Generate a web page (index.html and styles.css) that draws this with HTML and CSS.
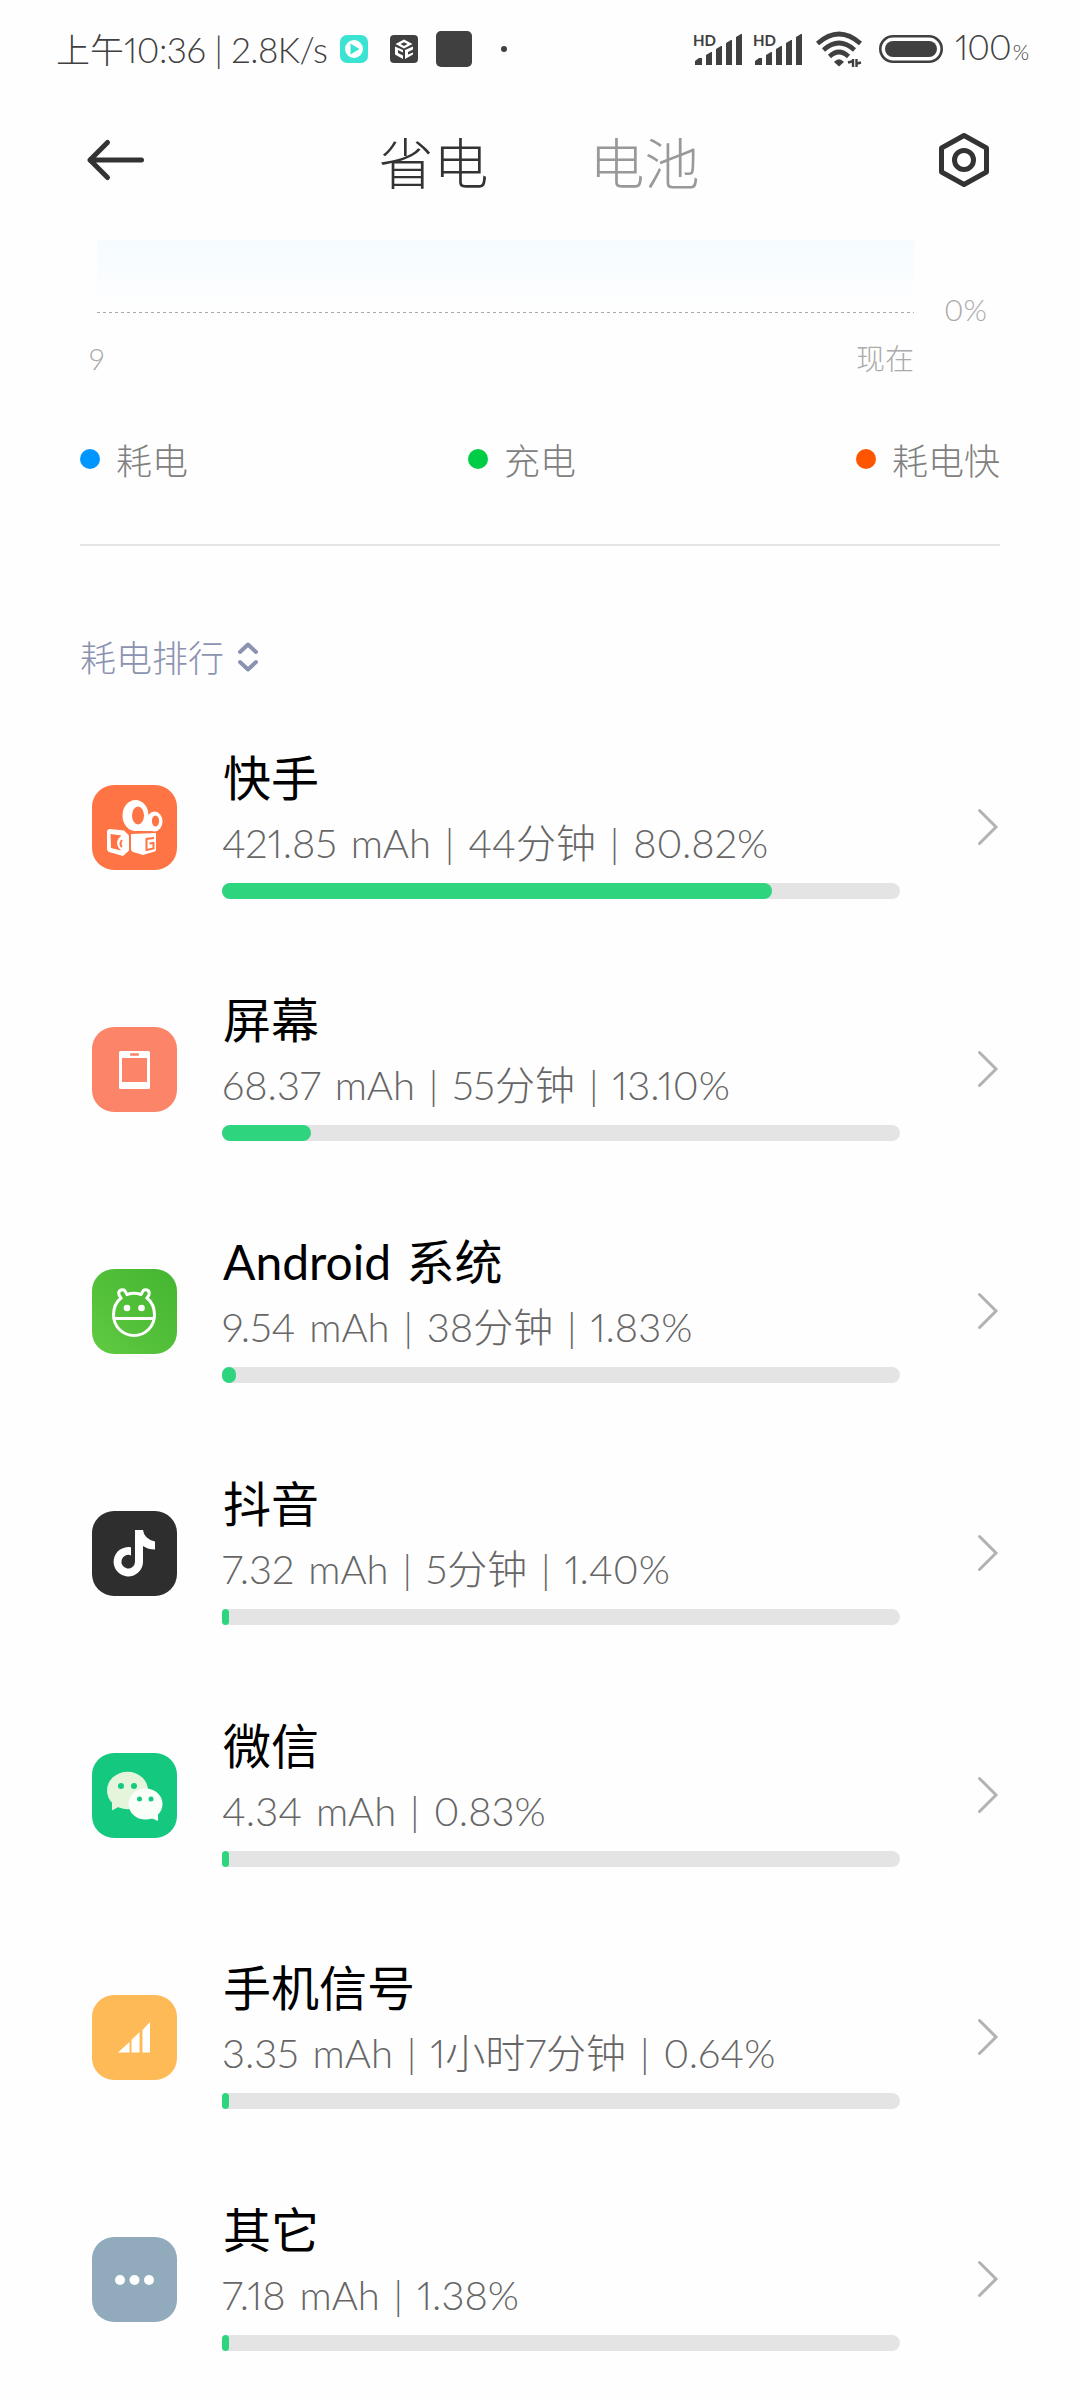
FILE: index.html
```
<!DOCTYPE html>
<html lang="zh-CN">
<head>
  <meta charset="UTF-8">
  <meta name="viewport" content="width=device-width, initial-scale=1.0">
  <title>省电与电池</title>
  <link rel="stylesheet" href="styles.css">
</head>
<body>
  <div class="statusbar">
    <span class="clock">上午<span class="clock-num">10:36 | 2.8K/s</span></span>
    <svg class="notif" width="132" height="36" viewBox="0 0 132 36">
      <rect x="0" y="4" width="28" height="28" rx="7" fill="#3be3d2"/>
      <circle cx="14" cy="18" r="9" fill="#fff"/>
      <path d="M10.5 12.5v11l9-5.5z" fill="#3be3d2"/>
      <rect x="50" y="4" width="28" height="28" rx="4" fill="#404040"/>
      <path d="M64 8.5l8.5 4.5-8.5 4.5-8.5-4.5zM63 28l-8-4.500v-8l8 3.500v2.500l-5-2.500v3l5 2.500zM65 28l8-4.500v-2l-5 2v-2.500l5-2.500v-3l-8 3.500z" fill="#fff"/>
      <path d="M64 11.300l3.500 1.700-3.500 2-3.500-2z" fill="#404040"/>
      <rect x="96" y="0" width="36" height="36" rx="5" fill="#404040"/>
    </svg>
    <span class="more-dot"></span>
    <div class="status-right">
      <svg class="signal" width="50" height="36" viewBox="0 0 50 36">
        <text class="hd" x="0" y="15" textLength="23" lengthAdjust="spacingAndGlyphs">HD</text>
        <path d="M2 34v-4l4-3h3v7zM13 34V24l5-3h1v13zM23 34V18l5-3h1v19zM33 34V12l5-3h1v25zM43 34V6l5-3h1v31z"/>
      </svg>
      <svg class="signal" width="50" height="36" viewBox="0 0 50 36">
        <text class="hd" x="0" y="15" textLength="23" lengthAdjust="spacingAndGlyphs">HD</text>
        <path d="M2 34v-4l4-3h3v7zM13 34V24l5-3h1v13zM23 34V18l5-3h1v19zM33 34V12l5-3h1v25zM43 34V6l5-3h1v31z"/>
      </svg>
      <svg class="wifi" width="46" height="36" viewBox="0 0 46 36">
        <g fill="none" stroke="#404040" stroke-width="4.600">
          <path d="M1.500 12.500q21.500-19 43 0"/>
          <path d="M7.500 19q15.500-14 31 0"/>
          <path d="M13.500 25.500q9.500-9 19 0"/>
        </g>
        <path d="M18 31q5-5.500 10 0l-5 4.500z" fill="#404040"/>
        <path d="M32 31.500l4-1M37 36v-8M40.500 36v-8M41 32.500l4-1" fill="none" stroke="#404040" stroke-width="2.400"/>
      </svg>
      <svg class="battery" width="64" height="28" viewBox="0 0 64 28">
        <rect x="1.300" y="1.300" width="61.400" height="25.400" rx="12.700" fill="none" stroke="#404040" stroke-width="2.600"/>
        <rect x="6" y="6" width="52" height="16" rx="8" fill="#404040"/>
      </svg>
      <span class="level">100<small>%</small></span>
    </div>
  </div>

  <div class="header">
    <svg class="back" width="58" height="40" viewBox="0 0 58 40">
      <path d="M20.500 2.500L3 20l17.500 17.500M3 20h51.500" fill="none" stroke="#333" stroke-width="5" stroke-linecap="round" stroke-linejoin="round"/>
    </svg>
    <div class="tabs">
      <span class="tab active">省电</span>
      <span class="tab">电池</span>
    </div>
    <svg class="settings" width="50" height="54" viewBox="0 0 50 54">
      <path d="M25 2.500L47.500 15v24L25 51.500 2.500 39V15z" fill="none" stroke="#333" stroke-width="5" stroke-linejoin="round"/>
      <circle cx="25" cy="27" r="9.500" fill="none" stroke="#333" stroke-width="5"/>
    </svg>
  </div>

  <div class="chart">
    <div class="plot"></div>
    <span class="percent">0%</span>
  </div>
  <div class="axis">
    <span>9</span>
    <span>现在</span>
  </div>

  <div class="legend">
    <span class="legend-item"><i class="dot blue"></i>耗电</span>
    <span class="legend-item"><i class="dot green"></i>充电</span>
    <span class="legend-item"><i class="dot orange"></i>耗电快</span>
  </div>

  <div class="sort">
    <span>耗电排行</span>
    <svg width="20" height="30" viewBox="0 0 20 30">
      <path d="M2 10l8-7.500 8 7.500M2 20l8 7.500 8-7.500" fill="none" stroke="#8c93b0" stroke-width="4" stroke-linecap="round" stroke-linejoin="round"/>
    </svg>
  </div>

  <div class="list">
    <div class="row">
      <svg class="icon" viewBox="0 0 85 85">
        <rect width="85" height="85" rx="22" fill="#ff7444"/>
        <ellipse cx="43.500" cy="30.500" rx="13" ry="15.500" fill="#fff"/>
        <ellipse cx="62.500" cy="36.500" rx="8" ry="10" fill="#fff"/>
        <path d="M40 36h22v10H43z" fill="#fff"/>
        <ellipse cx="46" cy="30.500" rx="6" ry="9" fill="#ff7444"/>
        <ellipse cx="63.500" cy="36" rx="3.600" ry="5.500" fill="#ff7444"/>
        <path d="M18 44l14 1.500 5 5v15L31 71l-14-4q-2-1-2-3V47q0-3 3-3z" fill="#fff"/>
        <path d="M18.500 49l11 1.500-3 3q-3 5 0 9l2.500 3-10-2.500z" fill="#ff7444"/>
        <path d="M30 55q-3 4 0 7" fill="none" stroke="#ff7444" stroke-width="2"/>
        <path d="M39 49l25-1v16q0 3-3 3l-10 3-10-3q-2-1-2-3z" fill="#fff"/>
        <path d="M62 53l-7.500 1v11l7-1.500v-5.500l-4 .500" fill="none" stroke="#ff7444" stroke-width="2"/>
      </svg>
      <div class="info">
        <div class="name">快手</div>
        <div class="usage">421.85 mAh | 44分钟 | 80.82%</div>
        <div class="bar"><div class="fill" style="width: 550px"></div></div>
      </div>
      <svg class="chevron" viewBox="0 0 22 38"><path d="M2.500 2.500L19 19 2.500 35.500"/></svg>
    </div>

    <div class="row">
      <svg class="icon" viewBox="0 0 85 85">
        <rect width="85" height="85" rx="22" fill="#fb8469"/>
        <rect x="27" y="24" width="31" height="38" rx="1.500" fill="#fff"/>
        <rect x="30" y="31" width="25" height="24" fill="#fb8469"/>
        <rect x="38" y="26.300" width="9" height="2.400" rx="1" fill="#fb8469"/>
      </svg>
      <div class="info">
        <div class="name">屏幕</div>
        <div class="usage">68.37 mAh | 55分钟 | 13.10%</div>
        <div class="bar"><div class="fill" style="width: 89px"></div></div>
      </div>
      <svg class="chevron" viewBox="0 0 22 38"><path d="M2.500 2.500L19 19 2.500 35.500"/></svg>
    </div>

    <div class="row">
      <svg class="icon" viewBox="0 0 85 85">
        <defs>
          <linearGradient id="android" x1="0" y1="1" x2="1" y2="0">
            <stop offset="0" stop-color="#60ca42"/>
            <stop offset="1" stop-color="#44b42f"/>
          </linearGradient>
        </defs>
        <rect width="85" height="85" rx="22" fill="url(#android)"/>
        <path d="M29 29l-2-3q-1-4 2-5 3-1 4 1l2 3.500q7-2.500 14 0l2-3.500q1-2 4-1 3 1 2 5l-2 3q7.500 6 7.500 17a20.500 20.500 0 0 1-41 0q0-11 7.500-17zM21.500 49.500h41" fill="none" stroke="#fff" stroke-width="3"/>
        <circle cx="35" cy="39" r="3.300" fill="#fff"/>
        <circle cx="49.500" cy="39" r="3.300" fill="#fff"/>
      </svg>
      <div class="info">
        <div class="name">Android 系统</div>
        <div class="usage">9.54 mAh | 38分钟 | 1.83%</div>
        <div class="bar"><div class="fill" style="width: 14px"></div></div>
      </div>
      <svg class="chevron" viewBox="0 0 22 38"><path d="M2.500 2.500L19 19 2.500 35.500"/></svg>
    </div>

    <div class="row">
      <svg class="icon" viewBox="0 0 85 85">
        <rect width="85" height="85" rx="22" fill="#2e2e2e"/>
        <path d="M43 19h8q1 9 12 11.500v8q-7 0-12-3.500v16a14.700 14.700 0 1 1-12-14.700v8.200a6.800 6.800 0 1 0 4 6.500z" fill="#fff"/>
      </svg>
      <div class="info">
        <div class="name">抖音</div>
        <div class="usage">7.32 mAh | 5分钟 | 1.40%</div>
        <div class="bar"><div class="fill" style="width: 7px"></div></div>
      </div>
      <svg class="chevron" viewBox="0 0 22 38"><path d="M2.500 2.500L19 19 2.500 35.500"/></svg>
    </div>

    <div class="row">
      <svg class="icon" viewBox="0 0 85 85">
        <rect width="85" height="85" rx="22" fill="#14c880"/>
        <ellipse cx="35.500" cy="37.500" rx="20.500" ry="18.800" fill="#e4f5dc"/>
        <path d="M20 48v9.500l9-5z" fill="#e4f5dc"/>
        <ellipse cx="53.500" cy="51" rx="17" ry="15.500" fill="#fbfffa"/>
        <path d="M57 64l9 4v-8z" fill="#fbfffa"/>
        <g fill="#14c880">
          <circle cx="29" cy="33" r="3"/>
          <circle cx="42" cy="33" r="3"/>
          <circle cx="47.500" cy="46" r="2.500"/>
          <circle cx="59" cy="46" r="2.500"/>
        </g>
      </svg>
      <div class="info">
        <div class="name">微信</div>
        <div class="usage">4.34 mAh | 0.83%</div>
        <div class="bar"><div class="fill" style="width: 7px"></div></div>
      </div>
      <svg class="chevron" viewBox="0 0 22 38"><path d="M2.500 2.500L19 19 2.500 35.500"/></svg>
    </div>

    <div class="row">
      <svg class="icon" viewBox="0 0 85 85">
        <rect width="85" height="85" rx="22" fill="#ffba58"/>
        <path d="M26 57.500L37.500 47v10.500zM39.500 45l8-8v20.500h-8zM50.500 35l7.500-8v30.500h-7.500z" fill="#fff"/>
      </svg>
      <div class="info">
        <div class="name">手机信号</div>
        <div class="usage">3.35 mAh | 1小时7分钟 | 0.64%</div>
        <div class="bar"><div class="fill" style="width: 7px"></div></div>
      </div>
      <svg class="chevron" viewBox="0 0 22 38"><path d="M2.500 2.500L19 19 2.500 35.500"/></svg>
    </div>

    <div class="row">
      <svg class="icon" viewBox="0 0 85 85">
        <rect width="85" height="85" rx="22" fill="#91abbd"/>
        <g fill="#fff">
          <circle cx="28" cy="43" r="5"/>
          <circle cx="42.500" cy="43" r="5"/>
          <circle cx="57" cy="43" r="5"/>
        </g>
      </svg>
      <div class="info">
        <div class="name">其它</div>
        <div class="usage">7.18 mAh | 1.38%</div>
        <div class="bar"><div class="fill" style="width: 7px"></div></div>
      </div>
      <svg class="chevron" viewBox="0 0 22 38"><path d="M2.500 2.500L19 19 2.500 35.500"/></svg>
    </div>
  </div>
</body>
</html>
```
FILE: styles.css
```
* {
  box-sizing: border-box;
}
body {
  margin: 0;
  width: 1080px;
  height: 2400px;
  overflow: hidden;
  background-color: #fefefe;
  font-family: Lato, "Noto Sans CJK SC", sans-serif;
  font-weight: 300;
  font-variant-numeric: proportional-nums;
}
svg {
  display: block;
  flex-shrink: 0;
  overflow: visible;
}

/* status bar */
.statusbar {
  display: flex;
  align-items: center;
  height: 98px;
  padding: 0 55px 0 56px;
  color: #404040;
}
.clock {
  flex-shrink: 0;
  width: 284px;
  font-size: 34px;
  line-height: 40px;
  white-space: nowrap;
}
.clock-num {
  font-size: 35px;
  letter-spacing: -0.5px;
}
.more-dot {
  flex-shrink: 0;
  width: 6px;
  height: 6px;
  margin-left: 29px;
  border-radius: 50%;
  background-color: #404040;
}
.status-right {
  display: flex;
  align-items: center;
  margin-left: auto;
}
.signal {
  margin-right: 10px;
  fill: #404040;
}
.hd {
  font-family: Lato, sans-serif;
  font-size: 16px;
  font-weight: 700;
}
.wifi {
  margin: 0 17px 0 3px;
}
.level {
  width: 70px;
  margin-left: 12px;
  font-size: 35px;
  line-height: 40px;
  letter-spacing: -1px;
  white-space: nowrap;
}
.level small {
  margin-left: 2px;
  font-size: 21px;
}

/* header */
.header {
  display: flex;
  align-items: center;
  justify-content: space-between;
  height: 124px;
  padding: 0 91px 0 87px;
}
.tabs {
  display: flex;
  gap: 101px;
  margin-right: 6px;
  padding-top: 5px;
}
.tab {
  font-size: 55px;
  line-height: 70px;
  color: #999;
}
.tab.active {
  color: #333;
}

/* chart */
.chart {
  display: flex;
  align-items: flex-end;
  height: 109px;
  padding: 18px 0 0 97px;
}
.plot {
  width: 817px;
  height: 73px;
  margin-bottom: 18px;
  background: repeating-linear-gradient(to right, #aaa 0 3px, transparent 3px 6px) 0 100% / 100% 1px no-repeat,
    linear-gradient(#f5fbff, #fefefe 66px);
}
.percent {
  margin: 0 0 2px 30px;
  font-size: 30px;
  line-height: 40px;
  color: #aaa;
}
.axis {
  display: flex;
  justify-content: space-between;
  height: 60px;
  padding: 8px 166px 0 89px;
  font-size: 29px;
  line-height: 40px;
  color: #aaa;
}

.legend {
  display: flex;
  justify-content: space-between;
  height: 155px;
  margin: 0 80px;
  padding-top: 43px;
  border-bottom: 2px solid #e5e5e5;
}
.legend-item {
  display: flex;
  align-items: center;
  height: 50px;
  font-size: 36px;
  color: #808080;
}
.dot {
  width: 20px;
  height: 20px;
  margin-right: 16px;
  border-radius: 50%;
}
.blue {
  background-color: #0096ff;
}
.green {
  background-color: #00cd46;
}
.orange {
  background-color: #ff5500;
}

.sort {
  display: flex;
  align-items: center;
  gap: 14px;
  height: 160px;
  padding: 62px 80px 0;
  font-size: 36px;
  color: #8c93b0;
}
.sort span {
  padding-bottom: 3px;
}

/* battery usage ranking */
.row {
  display: flex;
  align-items: center;
  height: 242px;
  padding-left: 92px;
}
.icon {
  width: 85px;
  height: 85px;
}
.info {
  width: 678px;
  height: 242px;
  margin-left: 45px;
  padding-top: 42px;
}
.name {
  padding-left: 1px;
  font-size: 48px;
  font-weight: 400;
  line-height: 60px;
  color: #000;
  word-spacing: 3px;
}
.usage {
  margin: 5px 0 10px;
  font-size: 40px;
  line-height: 60px;
  color: #666;
  white-space: nowrap;
  word-spacing: 3px;
}
.bar {
  height: 16px;
  border-radius: 8px;
  background-color: #e4e4e4;
}
.fill {
  height: 16px;
  border-radius: 8px;
  background-color: #2fd57e;
}
.chevron {
  width: 22px;
  height: 38px;
  margin-left: 77px;
  fill: none;
  stroke: #b2b2b2;
  stroke-width: 3;
  stroke-linecap: round;
}
```
